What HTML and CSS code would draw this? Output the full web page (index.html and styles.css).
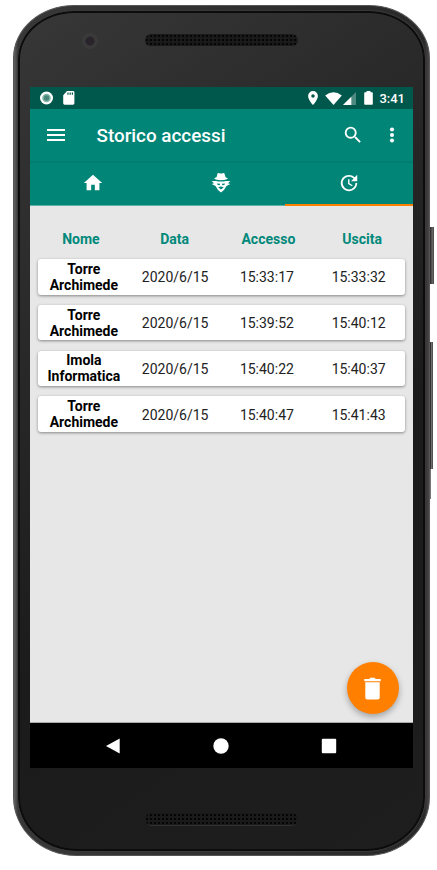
FILE: index.html
```html
<!DOCTYPE html>
<html lang="it">
<head>
<meta charset="utf-8">
<title>Storico accessi</title>
<link rel="stylesheet" href="styles.css">
</head>
<body>
<div class="device">
  <span class="side-key power"></span>
  <span class="side-key volume"></span>
  <div class="shell">
    <div class="bezel">
      <div class="forehead"><span class="camera"></span><span class="speaker"></span></div>
      <main class="screen">
        <div class="status">
          <svg class="rec" width="14" height="14" viewBox="0 0 14 14"><circle cx="6.500" cy="7" r="6.500" fill="#fff"/><circle cx="6.500" cy="7" r="4.300" fill="#83b5aa"/><circle cx="6.500" cy="7" r="2.700" fill="#49877a"/></svg>
          <svg class="sd" width="12" height="14" viewBox="0 0 12 14"><path fill="#fff" d="M4 0h6q1.400 0 1.400 1.400v10.900q0 1.400-1.400 1.400H1.600Q.2 13.700.2 12.300V4.200z"/><path stroke="#00574b" stroke-width="1.200" d="M5 1.500v2.300M7.200 1.500v2.300M9.400 1.500v2.300"/></svg>
          <span class="spacer"></span>
          <svg class="pin" width="10" height="14" viewBox="5 2 14 20"><path fill="#fff" d="M12 2a7 7 0 0 0-7 7c0 5.250 7 13 7 13s7-7.750 7-13a7 7 0 0 0-7-7zm0 9.500a2.500 2.500 0 1 1 0-5 2.500 2.500 0 0 1 0 5z"/></svg>
          <svg class="wifi" width="17" height="13" viewBox="0 0 17 13"><path fill="#fff" d="M.2 3.500Q8.500-3 16.800 3.500L8.500 13z"/></svg>
          <svg class="cell" width="13" height="13" viewBox="0 0 13 13"><path fill="#4f8a81" d="M13 0v13H0z"/><path fill="#fff" d="M8.300 4.700V13H0z"/></svg>
          <svg class="battery" width="9" height="14" viewBox="0 0 9 14"><path fill="#fff" d="M2.500 0h4v1.300H8q.8 0 .8.800v11q0 .7-.8.700H1q-.8 0-.8-.7v-11q0-.8.800-.8h1.500z"/></svg>
          <span class="clock">3:41</span>
        </div>
        <header class="toolbar">
          <svg class="menu" width="18" height="12" viewBox="3 6 18 12"><path fill="#fff" d="M3 18h18v-2H3v2zm0-5h18v-2H3v2zm0-7v2h18V6H3z"/></svg>
          <h1>Storico accessi</h1>
          <svg class="search" width="22" height="22" viewBox="0 0 24 24"><path fill="#fff" d="M15.500 14h-.790l-.280-.270A6.470 6.470 0 0 0 16 9.500 6.500 6.500 0 1 0 9.500 16c1.610 0 3.090-.590 4.230-1.570l.270.280v.790l5 4.990L20.490 19l-4.990-5zm-6 0a4.500 4.500 0 1 1 0-9 4.500 4.500 0 0 1 0 9z"/></svg>
          <svg class="more" width="22" height="22" viewBox="0 0 24 24" fill="#fff"><circle cx="12" cy="6" r="2.200"/><circle cx="12" cy="12" r="2.200"/><circle cx="12" cy="18" r="2.200"/></svg>
        </header>
        <nav class="tabs">
          <div class="tab"><svg width="22" height="22" viewBox="0 0 24 24"><path fill="#fff" d="M10 20v-6h4v6h5v-8h3L12 3 2 12h3v8z"/></svg></div>
          <div class="tab"><svg width="20" height="22" viewBox="0 0 20 22"><path fill="#fff" d="M6.500 1.500Q7.300.6 8.300 1.200Q10 2 11.700 1.200Q12.700.6 13.500 1.500L14.500 5.300Q16.800 5.900 16.800 6.800Q15 8.200 10 8.200T3.200 6.800Q3.200 5.900 5.500 5.300z"/><path fill="#fff" d="M.7 9L5 8.900Q10 10.300 15 8.900l4.300.1-2.300 2.300 2.300.8-3.800 1.900Q13.800 17.800 10 20.500Q6.200 17.800 4.500 14L.7 12.100l2.300-.8z"/><path fill="#008577" d="M6 11.400l3.200.3-.6 1.600-1.900-.2zM14 11.400l-3.200.3.600 1.600 1.900-.2zM7.200 15.200l2.800-.7 2.800.7L10 17.600z"/></svg></div>
          <div class="tab active"><svg width="22" height="22" viewBox="0 0 24 24"><path fill="#fff" d="M21 10.120h-6.780l2.740-2.820c-2.730-2.700-7.150-2.800-9.880-.1a6.875 6.875 0 0 0 0 9.790 7.020 7.020 0 0 0 9.880 0C18.320 15.650 19 14.080 19 12.100h2c0 1.980-.88 4.550-2.640 6.290-3.510 3.480-9.210 3.480-12.720 0-3.500-3.470-3.530-9.110-.02-12.580a8.987 8.987 0 0 1 12.650 0L21 3v7.120zM12.500 8v4.250l3.500 2.080-.720 1.210L11 13V8h1.500z"/></svg></div>
        </nav>
        <section class="content">
          <div class="row heading"><span>Nome</span><span>Data</span><span>Accesso</span><span>Uscita</span></div>
          <div class="row card"><b>Torre<br>Archimede</b><span>2020/6/15</span><span>15:33:17</span><span>15:33:32</span></div>
          <div class="row card"><b>Torre<br>Archimede</b><span>2020/6/15</span><span>15:39:52</span><span>15:40:12</span></div>
          <div class="row card"><b>Imola<br>Informatica</b><span>2020/6/15</span><span>15:40:22</span><span>15:40:37</span></div>
          <div class="row card"><b>Torre<br>Archimede</b><span>2020/6/15</span><span>15:40:47</span><span>15:41:43</span></div>
          <button class="fab" aria-label="Elimina"><svg width="17" height="23" viewBox="0 0 17 23"><path fill="#fff" d="M.3 2h5L6.200.8h4.600l.9 1.200h5v2.200H.3zM1.300 5.300h14.400v15.200q0 2-2 2H3.300q-2 0-2-2z"/></svg></button>
        </section>
        <footer class="navbar">
          <svg width="16" height="16" viewBox="0 0 16 16"><path fill="#fff" d="M14.700.6v15L1 8z"/></svg>
          <svg width="16" height="16" viewBox="0 0 16 16"><circle cx="8" cy="8" r="7.700" fill="#fff"/></svg>
          <svg width="16" height="16" viewBox="0 0 16 16"><rect x=".8" y=".8" width="14.400" height="14.400" rx="1" fill="#fff"/></svg>
        </footer>
      </main>
      <div class="chin"><span class="speaker"></span></div>
    </div>
  </div>
</div>
</body>
</html>
```
FILE: styles.css
```css
* { box-sizing: border-box; }
body { margin: 0; background: #fff; font-family: Roboto, sans-serif; }
svg { display: block; flex: none; }
.device { position: relative; width: 437px; height: 870px; padding: 5px 0 0 13px; }
.side-key { position: absolute; left: 430px; width: 4px; background: linear-gradient(90deg, #333 25%, #716d6b 50%, #444); }
.power { top: 227px; height: 57px; }
.volume { top: 342px; width: 3px; height: 127px; }
.device::after { content: ""; position: absolute; left: 430px; top: 469px; width: 1px; height: 30px; background: #777; }
.shell { position: relative; width: 417px; height: 851px; padding: 5px 4px 4px; border-radius: 61px 61px 63px 63px / 53px 53px 59px 59px; background: linear-gradient(90deg, #626262, #383838 4px, #292929 410px, #4a4647); border: 1px solid #555; }
.bezel { height: 100%; border: 2px solid #0c0c0c; border-radius: 56px 56px 59px 59px / 48px 48px 54px 54px; background: linear-gradient(145deg, #373738 0, #29292a 30%, #1b1b1c 60%, #1e1e1f); padding: 0 9px 0 10px; outline: 1px solid #383838; }
.forehead { height: 74px; display: flex; padding: 20px 0 0 52px; }
.camera { width: 16px; height: 16px; border-radius: 50%; background: radial-gradient(circle, #29242c 0 4px, #3a3a3b 5px); }
.speaker { width: 153px; height: 13px; border-radius: 7px; background-color: #1a1a1a; background-image: radial-gradient(circle, #050505 1px, transparent 1.300px); background-size: 4px 4px; border-bottom: 1px solid #303030; }
.forehead .speaker { margin: 1px 0 0 47px; }
.chin { padding: 45px 0 0 115px; }
.chin .speaker { display: block; }
.screen { width: 383px; height: 681px; display: flex; flex-direction: column; background: #e7e7e7; }
.status { height: 22px; flex: none; display: flex; align-items: center; background: #00574b; padding: 0 8px 0 10px; color: #fff; }
.sd { margin-left: 9px; }
.spacer { flex: 1; }
.wifi { margin-left: 7px; }
.cell { margin-left: 1px; }
.battery { margin-left: 8px; }
.clock { margin-left: 6px; font-size: 13px; font-weight: 500; line-height: 23px; }
.toolbar { height: 52px; flex: none; display: flex; align-items: center; background: #008577; padding: 0 10px 0 16.500px; color: #fff; }
h1 { margin: 2px auto 0 32px; font-size: 18.850px; font-weight: 500; line-height: 24px; }
.more { margin-left: 17px; }
.tabs { height: 45px; flex: none; display: grid; grid-template-columns: repeat(3, 1fr); background: linear-gradient(#00796c, #008577 3px); }
.tab { display: flex; align-items: center; justify-content: center; padding-right: 1px; border-bottom: 1px solid #5cb2a9; }
.active { border-bottom: 2px solid #ff8000; }
.content { flex: 1; position: relative; padding: 23px 8px 0; border-bottom: 1px solid #aaa; }
.row { display: grid; grid-template-columns: repeat(4, 1fr); align-items: center; text-align: center; font-size: 14px; color: #222; }
.heading { height: 20px; margin: 0 -4px 10px; color: #00897a; font-weight: 700; }
.card { height: 35.500px; margin-bottom: 10.300px; border-radius: 3px; background: #fff; box-shadow: 0 1px 3px rgba(0,0,0,.42); }
.card b { line-height: 16px; color: #000; }
.card span { padding: 1px 1px 0 0; }
.fab { position: absolute; left: 317px; bottom: 8px; width: 52px; height: 52px; border: 0; border-radius: 50%; padding: 0 1px 0 0; background: #ff8000; display: flex; align-items: center; justify-content: center; box-shadow: 0 3px 6px rgba(0,0,0,.3); }
.navbar { height: 45px; flex: none; background: #000; display: flex; align-items: center; gap: 92px; padding-left: 75px; }
```
